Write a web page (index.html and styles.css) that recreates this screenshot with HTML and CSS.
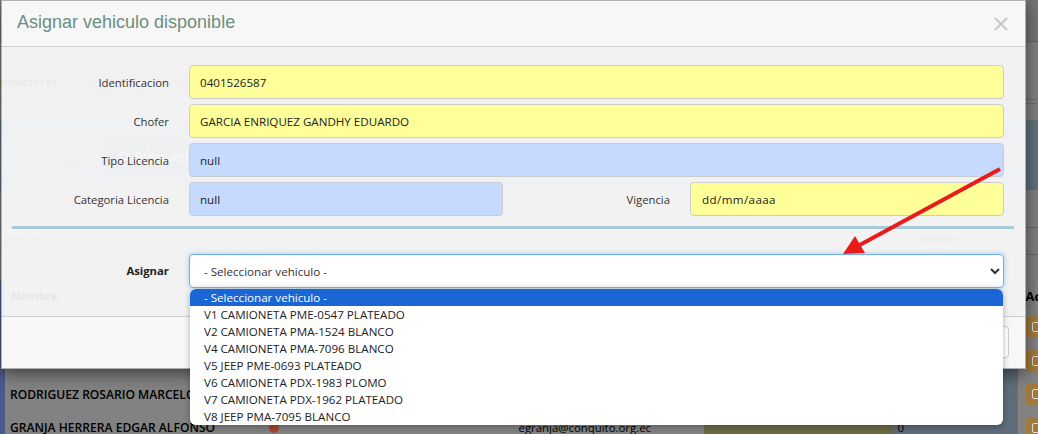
FILE: index.html
```html
<!DOCTYPE html>
<html lang="es">
<head>
    <meta charset="UTF-8">
    <meta name="viewport" content="width=device-width, initial-scale=1.0">
    <title>Asignar vehiculo disponible</title>
    <link rel="stylesheet" href="styles.css">
</head>
<body>
    <!-- Page behind the modal -->
    <div class="page">
        <div class="topbar"></div>
        <div class="tabs">
            <span class="tab-text">nductores</span>
            <span class="tab-box">
                <svg class="tab-icon" viewBox="0 0 12 12" width="12" height="12"><path d="M6 1l5 5-5 5-5-5z" fill="none" stroke="#b03030"/></svg>
                Pedido Personal
            </span>
        </div>
        <div class="filters">
            <div class="filter-select">
                <svg viewBox="0 0 10 6" width="10" height="6"><path d="M1 1l4 4 4-4" fill="none" stroke="#444" stroke-width="1.6"/></svg>
            </div>
            <div class="filter-btn">
                <svg class="search-icon" viewBox="0 0 12 12" width="12" height="12"><circle cx="5" cy="5" r="3.8" fill="none" stroke="#b4bec4" stroke-width="1.6"/><path d="M8 8l3 3" stroke="#b4bec4" stroke-width="1.6"/></svg>
                Búsqueda
            </div>
        </div>
        <div class="entries">
            <span>entries</span>
            <span class="search-label">Search:</span>
        </div>
        <table class="grid">
            <colgroup>
                <col class="c-name"><col class="c-state"><col class="c-mail"><col class="c-fill"><col class="c-count"><col class="c-act">
            </colgroup>
            <tr class="head"><th>Nombre</th><th></th><th></th><th></th><th></th><th>Ac</th></tr>
            <tr><td></td><td></td><td></td><td class="fill"></td><td class="count"></td><td><span class="act"><i></i></span></td></tr>
            <tr><td></td><td></td><td></td><td class="fill"></td><td class="count"></td><td><span class="act"><i></i></span></td></tr>
            <tr><td class="name">RODRIGUEZ ROSARIO MARCELO</td><td></td><td></td><td class="fill"></td><td class="count"></td><td><span class="act"><i></i></span></td></tr>
            <tr><td class="name">GRANJA HERRERA EDGAR ALFONSO</td><td><span class="dot"></span></td><td>egranja@conquito.org.ec</td><td class="fill"></td><td class="count">0</td><td><span class="act"><i></i></span></td></tr>
        </table>
    </div>

    <!-- Modal -->
    <div class="modal">
        <div class="modal-header">
            <h4>Asignar vehiculo disponible</h4>
            <svg class="close" viewBox="0 0 14 14" width="14" height="14"><path d="M1 1l12 12M13 1L1 13" stroke="#c9c9c9" stroke-width="2.4"/></svg>
        </div>
        <div class="modal-body">
            <div class="row">
                <label>Identificacion</label>
                <input class="yellow" type="text" value="0401526587">
            </div>
            <div class="row">
                <label>Chofer</label>
                <input class="yellow" type="text" value="GARCIA ENRIQUEZ GANDHY EDUARDO">
            </div>
            <div class="row">
                <label>Tipo Licencia</label>
                <input class="blue" type="text" value="null">
            </div>
            <div class="row four">
                <label>Categoria Licencia</label>
                <input class="blue" type="text" value="null">
                <label>Vigencia</label>
                <input class="yellow date" type="text" value="dd/mm/aaaa">
            </div>
            <hr>
            <div class="row assign">
                <label>Asignar</label>
                <div class="select-wrap">
                    <select>
                        <option>- Seleccionar vehiculo -</option>
                    </select>
                    <ul class="options">
                        <li class="selected">- Seleccionar vehiculo -</li>
                        <li>V1 CAMIONETA PME-0547 PLATEADO</li>
                        <li>V2 CAMIONETA PMA-1524 BLANCO</li>
                        <li>V4 CAMIONETA PMA-7096 BLANCO</li>
                        <li>V5 JEEP PME-0693 PLATEADO</li>
                        <li>V6 CAMIONETA PDX-1983 PLOMO</li>
                        <li>V7 CAMIONETA PDX-1962 PLATEADO</li>
                        <li>V8 JEEP PMA-7095 BLANCO</li>
                    </ul>
                </div>
            </div>
        </div>
        <div class="modal-footer">
            <button type="button">Cerrar</button>
        </div>
    </div>

    <!-- Red arrow annotation -->
    <svg class="arrow" viewBox="0 0 1038 434" width="1038" height="434">
        <path d="M1000 169L856 247" stroke="#e81c1c" stroke-width="4" fill="none"/>
        <path d="M843 254L855 236L865 253z" fill="#e81c1c"/>
    </svg>
</body>
</html>
```

FILE: styles.css
```css
* {
    box-sizing: border-box;
}

html, body {
    margin: 0;
    padding: 0;
    height: 434px;
    overflow: hidden;
}

body {
    position: relative;
    font-family: "Open Sans", "Noto Sans", sans-serif;
    font-size: 11.6px;
    color: #333;
    background-color: #7b7b7b;
}

/* Page behind the modal */
.page {
    height: 434px;
    overflow: hidden;
    background-color: #7e7e7e;
    color: #000;
}

.topbar {
    height: 42px;
    background-color: #737373;
    border-bottom: 1px solid #646464;
}

.tabs {
    height: 62px;
    padding-top: 23px;
    display: flex;
    align-items: flex-start;
    border-bottom: 1px solid #6c6c6c;
    box-shadow: inset 0 -3px 0 #7e7e7e, inset 0 -4px 0 #6c6c6c;
    font-size: 11.4px;
}

.tab-text {
    width: 70px;
    padding-top: 8px;
    line-height: 18px;
    font-weight: 700;
    color: #2a2a2a;
}

.tab-box {
    width: 125px;
    height: 35px;
    padding: 8px 0 0 22px;
    line-height: 18px;
    color: #b03030;
    background-color: #747474;
}

.tab-icon {
    vertical-align: -2px;
}

.filters {
    height: 70px;
    margin-top: 16px;
    padding-top: 21px;
    display: flex;
    gap: 21px;
    background-color: #5d7079;
}

.filter-select {
    width: 83px;
    height: 31px;
    padding: 12px 0 0 69px;
    background-color: #68777f;
}

.filter-btn {
    width: 124px;
    height: 31px;
    padding-left: 15px;
    line-height: 31px;
    font-size: 13px;
    color: #b4bec4;
    background-color: #4b5f73;
}

.search-icon {
    vertical-align: -2px;
}

.entries {
    height: 28px;
    margin-top: 37px;
    padding: 3px 0 0 4px;
    display: flex;
    justify-content: space-between;
    border-top: 1px solid #666;
    border-bottom: 1px solid #666;
    font-size: 11.2px;
    color: #333;
}

.search-label {
    padding-right: 78px;
    font-weight: 600;
}

.grid {
    width: 1038px;
    table-layout: fixed;
    border-collapse: collapse;
    border-left: 5px solid #4a5a8c;
    margin-top: 26px;
    background-color: #828282;
}

.c-name { width: 243px; }
.c-state { width: 268px; }
.c-mail { width: 190px; }
.c-fill { width: 190px; }
.c-count { width: 124px; }

.grid th {
    height: 29px;
    padding: 0 0 0 6px;
    text-align: left;
    font-size: 11.4px;
    font-weight: 700;
    background-color: #7e7e7e;
}

.grid th:last-child {
    padding-left: 8px;
    font-size: 13px;
}

.grid td {
    height: 33.5px;
    padding: 1px 0 0 5px;
    font-size: 11.4px;
    white-space: nowrap;
}

.grid td.name {
    font-weight: 600;
    font-size: 12.1px;
}

.grid td.fill {
    background-color: #6b6a45;
}

.grid td.count {
    padding-left: 4px;
    background-color: #5f6c7a;
}

.grid td:last-child {
    padding-left: 8px;
}

.dot {
    display: block;
    width: 10px;
    height: 10px;
    margin-left: 18px;
    border-radius: 50%;
    background-color: #a5452f;
}

.act {
    display: block;
    width: 24px;
    height: 22px;
    padding: 6px 0 0 6px;
    border-radius: 4px;
    background-color: #a07a3a;
}

.act i {
    display: block;
    width: 11px;
    height: 10px;
    border: 1.5px solid #ddd;
    border-radius: 2px;
}

/* Modal */
.modal {
    position: absolute;
    top: 0;
    left: 1px;
    width: 1025px;
    height: 369px;
    display: flex;
    flex-direction: column;
    border: 1px solid #b0b0b0;
    background-color: rgba(255, 255, 255, 0.9);
    box-shadow: 0 5px 15px rgba(0, 0, 0, 0.5);
}

.modal-header {
    height: 46px;
    padding: 0 17px 2px 15px;
    display: flex;
    align-items: center;
    justify-content: space-between;
    background-color: #f7f7f7;
    border-bottom: 1px solid #cfcfcf;
}

.modal-header h4 {
    margin: 0;
    font-family: "Liberation Sans", Arial, sans-serif;
    font-size: 18px;
    font-weight: 400;
    color: #6b8f80;
}

.close {
    margin-top: 2px;
}

.modal-body {
    flex: 1;
    padding-top: 18px;
}

.row {
    display: grid;
    grid-template-columns: 167px 1fr;
    column-gap: 20px;
    align-items: center;
    padding-right: 21px;
    margin-bottom: 5px;
}

.row.four {
    grid-template-columns: 167px 314px 147px 314px;
}

.row label {
    text-align: right;
    font-size: 11.3px;
    color: #333;
    line-height: 18px;
    padding-top: 2px;
}

.row input {
    width: 100%;
    height: 34px;
    padding: 0 10px;
    font: inherit;
    color: #222;
    border: 1px solid #ccc;
    border-radius: 4px;
    outline: none;
}

.yellow {
    background-color: #ffff99;
}

.blue {
    background-color: #c6daff;
}

.row input.date {
    padding-left: 11px;
    letter-spacing: 0.4px;
}

hr {
    height: 3px;
    margin: 10px 11px 0 10px;
    border: 0;
    background-color: #a8cbd9;
}

.row.assign {
    margin: 25px 0 0;
}

.row.assign label {
    font-weight: 700;
    padding-top: 0;
    color: #222;
}

.select-wrap {
    position: relative;
    height: 34px;
}

.select-wrap select {
    width: 100%;
    height: 34px;
    padding: 0 10px;
    font: inherit;
    color: #333;
    border: 1px solid #74b3ea;
    border-radius: 4px;
    outline: none;
    background-color: #fff;
    box-shadow: 0 0 5px rgba(102, 175, 233, 0.6), inset 0 -7px 6px -5px rgba(0, 0, 0, 0.05);
}

.options {
    position: absolute;
    top: 35px;
    left: 1px;
    right: 1px;
    margin: 0;
    padding: 0;
    list-style: none;
    overflow: hidden;
    border-radius: 6px;
    background-color: #fff;
    color: #222;
    box-shadow: 0 2px 6px rgba(0, 0, 0, 0.3);
}

.options li {
    height: 17px;
    padding-left: 14px;
    line-height: 17px;
}

.options li.selected {
    background-color: #1a66d4;
    color: #fff;
}

.modal-footer {
    height: 52px;
    padding: 9px 16px 0 0;
    display: flex;
    justify-content: flex-end;
    align-items: flex-start;
    background-color: #f7f7f7;
    border-top: 1px solid #cfcfcf;
}

.modal-footer button {
    height: 32px;
    padding: 0 14px;
    font: inherit;
    background-color: #fff;
    border: 1px solid #ccc;
    border-radius: 4px;
}

.arrow {
    position: absolute;
    top: 0;
    left: 0;
    pointer-events: none;
}
```
